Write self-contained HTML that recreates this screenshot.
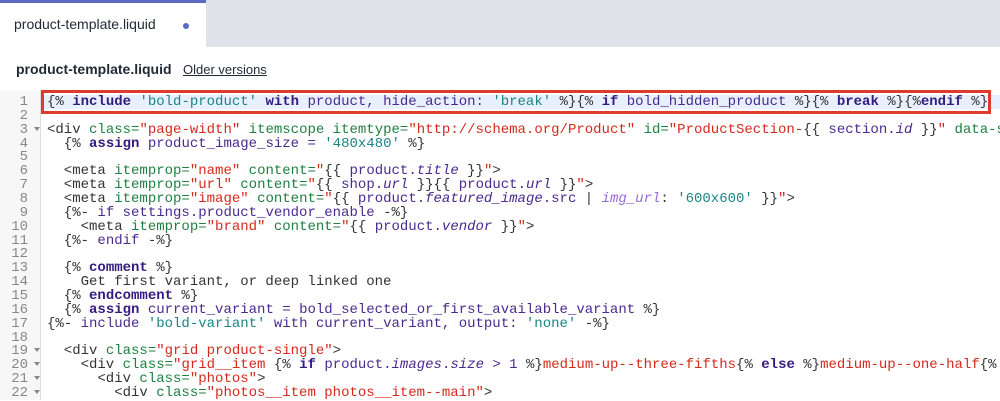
<!DOCTYPE html>
<html><head><style>
*{margin:0;padding:0;box-sizing:border-box}
body{width:1000px;height:400px;overflow:hidden;background:#fff;font-family:"Liberation Sans",sans-serif;position:relative}
.topbar{position:absolute;left:0;top:0;width:1000px;height:47px;background:#dfe3e8}
.tab{position:absolute;left:0;top:0;width:206px;height:47px;background:#fff;border-top:3px solid #5c6ac4}
.tab span{position:absolute;left:14px;top:13px;font-size:14px;color:#212b36}
.dot{position:absolute;left:183px;top:20px;width:6px;height:6px;border-radius:50%;background:#5c6ac4}
.title{position:absolute;left:16px;top:61px;font-size:14px;font-weight:bold;color:#212b36}
.older{position:absolute;left:183px;top:62px;font-size:13px;color:#212b36;text-decoration:underline}
.gutter{position:absolute;left:0;top:90px;width:41px;height:310px;background:#f7f7f7;border-right:1px solid #ddd}
.hl{position:absolute;left:41px;top:95px;width:959px;height:14px;background:#e8f0fe}
.box{position:absolute;left:41px;top:90px;width:950px;height:24px;border:3px solid #de3b2e}
.code{position:absolute;left:0;top:95px;font-family:"Liberation Mono",monospace;font-size:14px;line-height:13.86px;white-space:pre;color:#333}
.code div{height:13.86px;overflow:visible}
.ln{display:inline-block;width:28px;text-align:right;color:#888}
.ar{display:inline-block;width:19px;height:10px;position:relative}
.ar.d::after{content:"";position:absolute;left:6px;top:4px;border-left:3px solid transparent;border-right:3px solid transparent;border-top:4px solid #888}
.k{color:#351a80;font-weight:bold}.v{color:#4a2a8f}.i{color:#4a2a8f;font-style:italic}.f{color:#9a6ad8;font-style:italic}
.s{color:#d42a1c}.a{color:#1f7f3f}.t{color:#1b8585}
</style></head><body>
<div class="topbar"></div>
<div class="tab"><span>product-template.liquid</span><div class="dot"></div></div>
<div class="title">product-template.liquid</div>
<div class="older">Older versions</div>
<div class="gutter"></div>
<div class="hl"></div>
<div class="code"><div><span class="ln">1</span><span class="ar"></span>{% <span class="k">include</span> <span class="t">'bold-product'</span> <span class="k">with</span> <span class="v">product, hide_action:</span> <span class="t">'break'</span> %}{% <span class="k">if</span> <span class="v">bold_hidden_product</span> %}{% <span class="k">break</span> %}{%<span class="k">endif</span> %}</div><div><span class="ln">2</span><span class="ar"></span></div><div><span class="ln">3</span><span class="ar d"></span>&lt;div <span class="a">class=</span><span class="s">"page-width"</span> <span class="a">itemscope itemtype=</span><span class="s">"http://schema.org/Product"</span> <span class="a">id=</span><span class="s">"ProductSection-</span>{{ <span class="v">section.</span><span class="i">id</span> }}<span class="s">"</span> <span class="a">data-s</span></div><div><span class="ln">4</span><span class="ar"></span>  {% <span class="k">assign</span> <span class="v">product_image_size =</span> <span class="t">'480x480'</span> %}</div><div><span class="ln">5</span><span class="ar"></span></div><div><span class="ln">6</span><span class="ar"></span>  &lt;meta <span class="a">itemprop=</span><span class="s">"name"</span> <span class="a">content=</span><span class="s">"</span>{{ <span class="v">product.</span><span class="i">title</span> }}<span class="s">"</span>&gt;</div><div><span class="ln">7</span><span class="ar"></span>  &lt;meta <span class="a">itemprop=</span><span class="s">"url"</span> <span class="a">content=</span><span class="s">"</span>{{ <span class="v">shop.</span><span class="i">url</span> }}{{ <span class="v">product.</span><span class="i">url</span> }}<span class="s">"</span>&gt;</div><div><span class="ln">8</span><span class="ar"></span>  &lt;meta <span class="a">itemprop=</span><span class="s">"image"</span> <span class="a">content=</span><span class="s">"</span>{{ <span class="v">product.</span><span class="i">featured_image</span><span class="v">.src</span> | <span class="f">img_url</span>: <span class="t">'600x600'</span> }}<span class="s">"</span>&gt;</div><div><span class="ln">9</span><span class="ar"></span>  {%- <span class="v">if settings.product_vendor_enable</span> -%}</div><div><span class="ln">10</span><span class="ar"></span>    &lt;meta <span class="a">itemprop=</span><span class="s">"brand"</span> <span class="a">content=</span><span class="s">"</span>{{ <span class="v">product.</span><span class="i">vendor</span> }}<span class="s">"</span>&gt;</div><div><span class="ln">11</span><span class="ar"></span>  {%- <span class="v">endif</span> -%}</div><div><span class="ln">12</span><span class="ar"></span></div><div><span class="ln">13</span><span class="ar"></span>  {% <span class="k">comment</span> %}</div><div><span class="ln">14</span><span class="ar"></span>    Get first variant, or deep linked one</div><div><span class="ln">15</span><span class="ar"></span>  {% <span class="k">endcomment</span> %}</div><div><span class="ln">16</span><span class="ar"></span>  {% <span class="k">assign</span> <span class="v">current_variant = bold_selected_or_first_available_variant</span> %}</div><div><span class="ln">17</span><span class="ar"></span>{%- <span class="v">include</span> <span class="t">'bold-variant'</span> <span class="v">with current_variant, output:</span> <span class="t">'none'</span> -%}</div><div><span class="ln">18</span><span class="ar"></span></div><div><span class="ln">19</span><span class="ar d"></span>  &lt;div <span class="a">class=</span><span class="s">"grid product-single"</span>&gt;</div><div><span class="ln">20</span><span class="ar d"></span>    &lt;div <span class="a">class=</span><span class="s">"grid__item </span>{% <span class="k">if</span> <span class="v">product.</span><span class="i">images</span><span class="v">.</span><span class="i">size</span> <span class="v">&gt; 1</span> %}<span class="s">medium-up--three-fifths</span>{% <span class="k">else</span> %}<span class="s">medium-up--one-half</span>{% </div><div><span class="ln">21</span><span class="ar d"></span>      &lt;div <span class="a">class=</span><span class="s">"photos"</span>&gt;</div><div><span class="ln">22</span><span class="ar d"></span>        &lt;div <span class="a">class=</span><span class="s">"photos__item photos__item--main"</span>&gt;</div></div>
<div class="box"></div>
</body></html>
